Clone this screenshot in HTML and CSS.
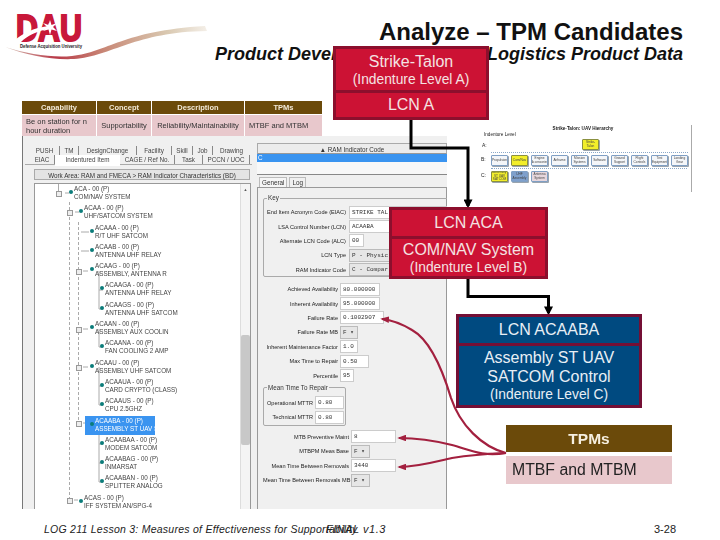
FILE: index.html
```html
<!DOCTYPE html>
<html lang="en">
<head>
    <meta charset="UTF-8">
    <meta name="viewport" content="width=device-width, initial-scale=1.0">
    <title>Analyze - TPM Candidates</title>
    <link rel="stylesheet" href="styles.css">
</head>
<body>

<div class="slide">

    <!-- Logo and swoosh -->
    <svg class="logo" width="215" height="65" viewBox="0 0 215 65">
        <defs>
            <linearGradient id="swoosh" x1="0" x2="1" y1="0" y2="0">
                <stop offset="0" stop-color="#d8c8bc"/>
                <stop offset="0.25" stop-color="#b83a48"/>
                <stop offset="0.5" stop-color="#c98a78"/>
                <stop offset="0.8" stop-color="#d9c8b0"/>
                <stop offset="1" stop-color="#f4efe8"/>
            </linearGradient>
        </defs>
        <path d="M5 47C28 54 52 58 72 56 108 52 122 31 205 26L207 31C135 32 112 56 74 59 50 60 26 55 5 47Z" fill="url(#swoosh)"/>
        <text class="logo-letters" x="16" y="41" textLength="66" lengthAdjust="spacingAndGlyphs">DAU</text>
        <path d="M13 42C22 33 34 28 48 26L48 29C37 31 27 36 21 42Z" fill="#fff"/>
        <path d="M50 20L51.500 25 57 23 53 27 57 31 51.500 29.500 50 35 48.500 29.500 43 31 47 27 43 23 48.500 25Z" fill="#fff"/>
        <text class="logo-name" x="20" y="47.500" textLength="62" lengthAdjust="spacingAndGlyphs">Defense Acquisition University</text>
    </svg>

    <h1 class="title">Analyze – TPM Candidates</h1>
    <h2 class="subtitle">Product Development Data and Logistics Product Data</h2>

    <!-- Requirements table -->
    <div class="req-table">
        <div class="req-head">Capability</div>
        <div class="req-head">Concept</div>
        <div class="req-head">Description</div>
        <div class="req-head">TPMs</div>
        <div class="req-cell req-left">Be on station for n<br>hour duration</div>
        <div class="req-cell">Supportability</div>
        <div class="req-cell">Reliability/Maintainability</div>
        <div class="req-cell req-left">MTBF and MTBM</div>
    </div>

    <!-- Application screenshot -->
    <div class="app">
        <div class="nav-pane">
            <div class="tabs">
                <span class="tab t-push">PUSH</span>
                <span class="tab t-tm">TM</span>
                <span class="tab t-design">DesignChange</span>
                <span class="tab t-facility">Facility</span>
                <span class="tab t-skill">Skill</span>
                <span class="tab t-job">Job</span>
                <span class="tab t-drawing">Drawing</span>
            </div>
            <div class="tabs tabs-front">
                <span class="tab t-eiac">EIAC</span>
                <span class="tab tab-on t-item">Indentured Item</span>
                <span class="tab t-cage">CAGE / Ref No.</span>
                <span class="tab t-task">Task</span>
                <span class="tab t-pccn">PCCN / UOC</span>
            </div>
            <div class="work-bar">Work Area: RAM and FMECA &gt; RAM Indicator Characteristics (BD)</div>
            <div class="tree">
                <svg class="tree-lines" width="80" height="328" viewBox="34 182 80 328">
                    <g fill="none" stroke="#aaa" stroke-width="1">
                        <path stroke-dasharray="3 2" d="M68.500 200V498M77.500 220V421"/>
                        <path d="M57.500 182V191M68 191H64M78 210H74M88 230H80M88 249H80M87 269H82M98 269V307M98 288H102M98 307H102M87 327H82M98 327V345M98 345H102M87 365H82M98 365V403M98 384H102M98 403H102M87 421H82M98 421V480M98 442H102M98 461H102M98 480H102M77 498H73"/>
                    </g>
                    <g fill="#eee" stroke="#999" stroke-width="1">
                        <rect x="55.500" y="189.500" width="5" height="5"/>
                        <rect x="66.500" y="208.500" width="5" height="5"/>
                        <rect x="75.500" y="267.500" width="5" height="5"/>
                        <rect x="75.500" y="325.500" width="5" height="5"/>
                        <rect x="75.500" y="363.500" width="5" height="5"/>
                        <rect x="75.500" y="419.500" width="5" height="5"/>
                        <rect x="66.500" y="496.500" width="5" height="5"/>
                    </g>
                </svg>
                <div class="row lvl0"><div class="node">ACA - 00 (P)<br>COM/NAV SYSTEM</div></div>
                <div class="row lvl1"><div class="node">ACAA - 00 (P)<br>UHF/SATCOM SYSTEM</div></div>
                <div class="row lvl2"><div class="node">ACAAA - 00 (P)<br>R/T UHF SATCOM</div></div>
                <div class="row lvl2"><div class="node">ACAAB - 00 (P)<br>ANTENNA UHF RELAY</div></div>
                <div class="row lvl2"><div class="node">ACAAG - 00 (P)<br>ASSEMBLY, ANTENNA R</div></div>
                <div class="row lvl3"><div class="node">ACAAGA - 00 (P)<br>ANTENNA UHF RELAY</div></div>
                <div class="row lvl3"><div class="node">ACAAGS - 00 (P)<br>ANTENNA UHF SATCOM</div></div>
                <div class="row lvl2"><div class="node">ACAAN - 00 (P)<br>ASSEMBLY AUX COOLIN</div></div>
                <div class="row lvl3"><div class="node">ACAANA - 00 (P)<br>FAN COOLING 2 AMP</div></div>
                <div class="row lvl2"><div class="node">ACAAU - 00 (P)<br>ASSEMBLY UHF SATCOM</div></div>
                <div class="row lvl3"><div class="node">ACAAUA - 00 (P)<br>CARD CRYPTO (CLASS)</div></div>
                <div class="row lvl3"><div class="node">ACAAUS - 00 (P)<br>CPU 2.5GHZ</div></div>
                <div class="row lvl2"><div class="node node-on">ACAABA - 00 (P)<br>ASSEMBLY ST UAV SAT</div></div>
                <div class="row lvl3"><div class="node">ACAABAA - 00 (P)<br>MODEM SATCOM</div></div>
                <div class="row lvl3"><div class="node">ACAABAG - 00 (P)<br>INMARSAT</div></div>
                <div class="row lvl3"><div class="node">ACAABAN - 00 (P)<br>SPLITTER ANALOG</div></div>
                <div class="row lvl1"><div class="node">ACAS - 00 (P)<br>IFF SYSTEM AN/SPG-4</div></div>
                <div class="scrollbar"><span class="scroll-up">▲</span><div class="thumb"></div></div>
            </div>
        </div>

        <div class="detail-pane">
            <div class="list-head">▲ RAM Indicator Code</div>
            <div class="list-sel">C</div>
            <div class="list-blank"></div>
            <div class="detail-tabs">
                <span class="dtab dtab-on">General</span>
                <span class="dtab">Log</span>
            </div>
            <div class="detail">
                <fieldset class="group key-group">
                    <legend>Key</legend>
                    <div class="field f-key"><label>End Item Acronym Code (EIAC)</label><span class="val w-long">STRIKE TAL</span></div>
                    <div class="field f-key"><label>LSA Control Number (LCN)</label><span class="val w-long">ACAABA</span></div>
                    <div class="field f-key"><label>Alternate LCN Code (ALC)</label><span class="val w-15">00</span></div>
                    <div class="field f-key"><label>LCN Type</label><span class="val val-sel w-long">P - Physic</span></div>
                    <div class="field f-key"><label>RAM Indicator Code</label><span class="val val-sel w-long">C - Compar</span></div>
                </fieldset>
                <div class="stack-a">
                    <div class="field f-a"><label>Achieved Availability</label><span class="val w-40">80.000000</span></div>
                    <div class="field f-a"><label>Inherent Availability</label><span class="val w-40">95.000000</span></div>
                    <div class="field f-a"><label>Failure Rate</label><span class="val w-44">0.1002907</span></div>
                    <div class="field f-a"><label>Failure Rate MB</label><span class="val val-sel w-18">F ▾</span></div>
                    <div class="field f-a"><label>Inherent Maintenance Factor</label><span class="val w-18">1.0</span></div>
                    <div class="field f-a"><label>Max Time to Repair</label><span class="val w-29">0.50</span></div>
                    <div class="field f-a"><label>Percentile</label><span class="val w-14">95</span></div>
                </div>
                <fieldset class="group mttr-group">
                    <legend>Mean Time To Repair</legend>
                    <div class="field f-m"><label>Operational MTTR</label><span class="val w-29">0.80</span></div>
                    <div class="field f-m"><label>Technical MTTR</label><span class="val w-29">0.80</span></div>
                </fieldset>
                <div class="stack-b">
                    <div class="field f-b"><label>MTB Preventive Maint</label><span class="val w-45">8</span></div>
                    <div class="field f-b"><label>MTBPM Meas Base</label><span class="val val-sel w-19">F ▾</span></div>
                    <div class="field f-b"><label>Mean Time Between Removals</label><span class="val w-45">3440</span></div>
                    <div class="field f-b"><label>Mean Time Between Removals MB</label><span class="val val-sel w-19">F ▾</span></div>
                </div>
            </div>
        </div>
    </div>

    <!-- UAV hierarchy chart -->
    <div class="chart">
        <div class="chart-title">Strike-Talon: UAV Hierarchy</div>
        <div class="chart-key">Indenture Level</div>
        <div class="level level-a"><span class="level-name">A:</span><div class="chip chip-y">Strike-Talon</div></div>
        <div class="level level-b">
            <span class="level-name">B:</span>
            <div class="chip">Propulsion</div>
            <div class="chip chip-y">Com/Nav</div>
            <div class="chip">Engine Accessories</div>
            <div class="chip">Airframe</div>
            <div class="chip">Mission Systems</div>
            <div class="chip">Software</div>
            <div class="chip">Ground Support</div>
            <div class="chip">Flight Controls</div>
            <div class="chip">Test Equipment</div>
            <div class="chip">Landing Gear</div>
        </div>
        <div class="level level-c">
            <span class="level-name">C:</span>
            <div class="chip chip-y">Assembly ST UAV SATCOM</div>
            <div class="chip chip-b">UHF Assembly</div>
            <div class="chip chip-p">Antenna System</div>
        </div>
    </div>

    <!-- Connectors and red call-out arrows -->
    <svg class="wires" width="720" height="540" viewBox="0 0 720 540">
        <defs>
            <marker id="head-k" markerWidth="3" markerHeight="3" refX="2.200" refY="1.500" orient="auto">
                <path d="M0 0L3 1.500 0 3Z" fill="#000"/>
            </marker>
            <marker id="head-r" markerWidth="4" markerHeight="3" refX="3.200" refY="1.500" orient="auto">
                <path d="M0 0L4 1.500 0 3Z" fill="#a3203f"/>
            </marker>
        </defs>
        <g fill="none" stroke="#000" stroke-width="3">
            <path d="M411 120V148H468V206" marker-end="url(#head-k)"/>
            <path d="M468 279V296.500H548.500V313" marker-end="url(#head-k)"/>
        </g>
        <g fill="none" stroke="#a3203f" stroke-width="2.200">
            <path d="M506 453C482 447 460 425 451 398 442 368 430 340 412 330 402 324 392 320 382 319" marker-end="url(#head-r)"/>
            <path d="M506 453C482 457 470 450 452 445 432 440 418 438 399 438" marker-end="url(#head-r)"/>
            <path d="M506 453C482 454 470 455 452 458 434 462 418 467 399 467" marker-end="url(#head-r)"/>
        </g>
    </svg>

    <!-- Indenture boxes -->
    <div class="box box-red box-a">
        <div class="pane pane-top">
            <div class="line-big">Strike-Talon</div>
            <div class="line-small">(Indenture Level A)</div>
        </div>
        <div class="pane pane-lcn">LCN A</div>
    </div>
    <div class="box box-red box-b">
        <div class="pane pane-lcn">LCN ACA</div>
        <div class="pane pane-fill">
            <div class="line-big">COM/NAV System</div>
            <div class="line-small">(Indenture Level B)</div>
        </div>
    </div>
    <div class="box box-blue box-c">
        <div class="pane pane-lcn">LCN ACAABA</div>
        <div class="pane pane-fill">
            <div class="line-big">Assembly ST UAV</div>
            <div class="line-big">SATCOM Control</div>
            <div class="line-small">(Indenture Level C)</div>
        </div>
    </div>

    <!-- TPMs call-out -->
    <div class="tpm">
        <div class="tpm-head">TPMs</div>
        <div class="tpm-body">MTBF and MTBM</div>
    </div>

    <!-- Footer -->
    <div class="foot foot-left">LOG 211 Lesson 3: Measures of Effectiveness for Supportability</div>
    <div class="foot foot-mid">FINAL v1.3</div>
    <div class="foot foot-page">3-28</div>

</div>

</body>
</html>
```

FILE: styles.css
```css
body {
    margin: 0;
    font-family: "Liberation Sans", Arial, sans-serif;
    background: #fff;
}

.slide {
    position: relative;
    width: 720px;
    height: 540px;
    overflow: hidden;
    background: #fff;
}

/* logo */
.logo {
    position: absolute;
    left: 0;
    top: 0;
}

.logo-letters {
    font-family: "Liberation Sans", sans-serif;
    font-size: 36px;
    font-weight: bold;
    fill: #c8183a;
    stroke: #c8183a;
    stroke-width: 2px;
}

.logo-name {
    font-size: 5px;
    font-weight: bold;
    fill: #222;
}

/* headings */
.title {
    position: absolute;
    right: 37px;
    top: 18px;
    margin: 0;
    font-size: 24px;
    line-height: 27px;
    font-weight: bold;
    color: #111;
    white-space: nowrap;
}

.subtitle {
    position: absolute;
    right: 37px;
    top: 43px;
    margin: 0;
    font-size: 18px;
    line-height: 22px;
    font-weight: bold;
    font-style: italic;
    color: #111;
    white-space: nowrap;
}

/* table at the top */
.req-table {
    position: absolute;
    left: 22px;
    top: 101px;
    width: 300px;
    display: grid;
    grid-template-columns: 74px 54px 92px 77px;
    grid-template-rows: 13px 21px;
    gap: 1px;
    font-size: 7.5px;
    filter: blur(0.4px);
}

.req-head {
    display: flex;
    align-items: center;
    justify-content: center;
    background: #6b4a0a;
    color: #f3ead8;
    font-weight: bold;
}

.req-cell {
    display: flex;
    align-items: center;
    justify-content: center;
    background: #e8c8cc;
    color: #333;
    line-height: 9px;
}

.req-left {
    justify-content: flex-start;
    padding-left: 4px;
}

/* screenshot of the application */
.app {
    position: absolute;
    left: 22px;
    top: 136px;
    width: 425px;
    height: 373px;
    display: flex;
    gap: 4px;
    background: #f0f0f0;
    font-size: 6.3px;
    color: #333;
    filter: blur(0.4px);
    overflow: hidden;
}

.nav-pane {
    width: 230px;
    flex: none;
    box-sizing: border-box;
    padding: 10px 0 0 2px;
    border-left: 1px solid #777;
}

.tabs {
    display: flex;
    height: 9px;
    padding-left: 5px;
    line-height: 9px;
    color: #444;
}

.tabs-front {
    height: 9px;
    border-bottom: 1px solid #aaa;
}

.tab {
    flex: none;
    box-sizing: border-box;
    text-align: center;
    border-right: 1px solid #888;
}

.tab-on {
    background: #fff;
    height: 11px;
}

.t-push { width: 30px; }
.t-tm { width: 19px; }
.t-design { width: 58px; }
.t-facility { width: 35px; }
.t-skill { width: 21px; }
.t-job { width: 20px; }
.t-drawing { width: 37px; border-right: 0; }
.t-eiac { width: 25px; }
.t-item { width: 65px; border-right: 0; }
.t-cage { width: 55px; }
.t-task { width: 28px; }
.t-pccn { width: 47px; }

.work-bar {
    height: 11px;
    width: 216px;
    margin: 4px 0 3px 9px;
    line-height: 11px;
    text-align: center;
    background: #e4e4e4;
    border: 1px solid #aaa;
    box-sizing: border-box;
    color: #333;
}

.tree {
    position: relative;
    box-sizing: border-box;
    width: 217px;
    height: 329px;
    margin-left: 9px;
    background: #fff;
    border: 1px solid #999;
    overflow: hidden;
}

.tree-lines {
    position: absolute;
    left: 0;
    top: 0;
}

.row {
    position: relative;
    height: 19.3px;
    color: #444;
}

.lvl0 { padding-left: 29px; }
.lvl1 { padding-left: 39px; }
.lvl2 { padding-left: 50px; }
.lvl3 { padding-left: 60px; }

.node {
    position: relative;
    display: inline-block;
    box-sizing: border-box;
    height: 19px;
    padding: 1px 3px 0 10px;
    line-height: 8px;
    white-space: nowrap;
}

.node::before {
    content: "";
    position: absolute;
    left: 5px;
    top: 6px;
    width: 4px;
    height: 4px;
    border-radius: 50%;
    background: #0b7c7a;
}

.node-on {
    width: 70px;
    background: #3a94f0;
    color: #fff;
}

.scrollbar {
    position: absolute;
    right: 0;
    top: 0;
    bottom: 0;
    width: 9px;
    background: #f4f4f4;
    border-left: 1px solid #ddd;
}

.scroll-up {
    display: block;
    text-align: center;
    font-size: 4px;
    margin-top: 3px;
    color: #555;
}

.thumb {
    position: absolute;
    left: 0;
    right: 0;
    top: 151px;
    height: 110px;
    background: #c8c8c8;
    border-radius: 2px;
}

.detail-pane {
    flex: none;
    width: 191px;
    padding-top: 7px;
    box-sizing: border-box;
}

.list-head {
    height: 11px;
    line-height: 11px;
    margin-left: 1px;
    text-align: center;
    background: #ececec;
    border: 1px solid #aaa;
    border-bottom: 1px solid #999;
    box-sizing: border-box;
}

.list-sel {
    height: 8px;
    line-height: 8px;
    margin-left: 1px;
    padding-left: 1px;
    background: #3a94f0;
    color: #fff;
}

.list-blank {
    height: 13px;
    margin-left: 1px;
    background: #f8f8f8;
    border-bottom: 1px solid #888;
    box-sizing: border-box;
}

.detail-tabs {
    display: flex;
    height: 10px;
    margin: 2px 0 0 3px;
    gap: 2px;
}

.dtab {
    line-height: 10px;
    padding: 0 2px;
    border: 1px solid #bbb;
    border-bottom: 0;
}

.dtab-on {
    background: #f6f6f6;
}

.detail {
    box-sizing: border-box;
    height: 322px;
    margin-left: 1px;
    padding: 6px 0 0 5px;
    border: 1px solid #999;
    border-bottom: 0;
}

.group {
    box-sizing: border-box;
    margin: 0;
    padding: 0;
    border: 1px solid #aaa;
    border-radius: 2px;
}

.group legend {
    padding: 0 1px;
    margin-left: 3px;
    line-height: 8px;
}

.key-group {
    height: 83px;
    width: 190px;
    padding-top: 3px;
}

.mttr-group {
    width: 83px;
    height: 42px;
    margin-top: 1px;
    padding-top: 4px;
}

.field {
    display: flex;
    align-items: center;
    height: 14.4px;
    white-space: nowrap;
}

.field label {
    flex: none;
    box-sizing: border-box;
    font-size: 5.6px;
    color: #222;
    text-align: right;
}

.f-key { gap: 3px; }
.f-key label { width: 82px; }
.f-a { gap: 2px; }
.f-a label { width: 75px; }
.f-m { gap: 2px; }
.f-m label { width: 49px; }
.f-b { gap: 2px; }
.f-b label { width: 86px; }

.val {
    flex: none;
    box-sizing: border-box;
    height: 13px;
    padding-left: 2px;
    line-height: 12px;
    font-family: "Liberation Mono", monospace;
    font-size: 6px;
    background: #fff;
    border: 1px solid #ccc;
}

.val-sel {
    background: #e6e6e6;
    border-color: #bbb;
}

.stack-a {
    margin-top: 5px;
}

.stack-b {
    margin-top: 4px;
}

.w-long { width: 100px; }
.w-14 { width: 14px; }
.w-15 { width: 15px; }
.w-18 { width: 18px; }
.w-19 { width: 19px; }
.w-29 { width: 29px; }
.w-40 { width: 40px; }
.w-44 { width: 44px; }
.w-45 { width: 45px; }

/* hierarchy chart */
.chart {
    position: absolute;
    left: 478px;
    top: 125px;
    width: 213px;
    height: 67px;
    border-right: 1px solid #aaa;
    font-size: 3.2px;
    color: #444;
    filter: blur(0.4px);
}

.chart-title {
    text-align: center;
    font-size: 4.6px;
    font-weight: bold;
    line-height: 8px;
    margin-left: -3px;
    color: #222;
}

.chart-key {
    position: absolute;
    left: 6px;
    top: 7px;
    font-size: 4.6px;
    line-height: 6px;
    color: #222;
}

.level {
    position: absolute;
    left: 13px;
    display: flex;
    gap: 3px;
}

.level-name {
    position: absolute;
    left: -10px;
    top: 3px;
    font-size: 5px;
    color: #222;
}

.level-a {
    top: 14px;
    left: 104px;
}

.level-a .level-name {
    left: -100px;
}

.level-b {
    top: 27px;
    padding-top: 2px;
    border-top: 1px dotted #8aa8c8;
}

.level-c {
    top: 43px;
    padding-top: 2px;
    padding-right: 139px;
    border-top: 1px dotted #8aa8c8;
}

.chip {
    flex: none;
    box-sizing: border-box;
    width: 17px;
    height: 11px;
    display: flex;
    align-items: center;
    justify-content: center;
    text-align: center;
    line-height: 3.500px;
    background: #f4f6f9;
    border: 1px solid #7f9fc4;
    border-radius: 1px;
    box-shadow: 1px 1px 0 #9aa4ae;
    overflow: hidden;
}

.chip-y { background: #f2ee2a; border-color: #8a9040; }
.chip-b { background: #7fa0cc; }
.chip-p { background: #e6d6dc; }

/* connectors */
.wires {
    position: absolute;
    left: 0;
    top: 0;
}

/* indenture boxes */
.box {
    position: absolute;
    box-sizing: border-box;
    border: 3px solid;
    display: flex;
    flex-direction: column;
    color: #f4e2e2;
    text-align: center;
}

.box-red {
    border-color: #8c0f2d;
    background: #cc1234;
}

.box-blue {
    border-color: #740f35;
    background: #004a80;
    color: #e8eff5;
}

.pane {
    display: flex;
    flex-direction: column;
    justify-content: center;
}

.pane-lcn {
    font-size: 16px;
}

.pane-top {
    height: 41px;
    border-bottom: 3px solid #8c0f2d;
}

.pane-fill {
    flex: 1;
    border-top: 3px solid;
}

.box-red .pane-fill { border-top-color: #8c0f2d; }
.box-blue .pane-fill { border-top-color: #740f35; }

.line-big {
    font-size: 16px;
    line-height: 19px;
}

.line-small {
    font-size: 13.8px;
    line-height: 17px;
}

.box-a {
    left: 333px;
    top: 46px;
    width: 156px;
    height: 74px;
}

.box-a .pane-lcn { flex: 1; }

.box-b {
    left: 389px;
    top: 207px;
    width: 159px;
    height: 72px;
}

.box-b .pane-lcn { height: 26px; }

.box-c {
    left: 456px;
    top: 314px;
    width: 186px;
    height: 94px;
}

.box-c .pane-lcn { height: 26px; }

/* TPMs call-out */
.tpm {
    position: absolute;
    left: 506px;
    top: 425px;
    width: 166px;
    filter: blur(0.3px);
}

.tpm-head {
    height: 27px;
    line-height: 27px;
    background: #6b4a0a;
    color: #f6efe0;
    font-size: 15.5px;
    font-weight: bold;
    text-align: center;
}

.tpm-body {
    height: 28px;
    margin-top: 4px;
    padding-left: 6px;
    line-height: 28px;
    background: #e8c8cc;
    color: #222;
    font-size: 15.8px;
}

/* footer */
.foot {
    position: absolute;
    top: 523px;
    font-size: 10.5px;
    line-height: 13px;
    color: #222;
    white-space: nowrap;
}

.foot-left {
    left: 44px;
    font-style: italic;
    letter-spacing: 0.25px;
}

.foot-mid {
    left: 326px;
    font-size: 11px;
    font-style: italic;
    letter-spacing: 0.5px;
}

.foot-page {
    left: 654px;
    font-size: 11px;
}
```
